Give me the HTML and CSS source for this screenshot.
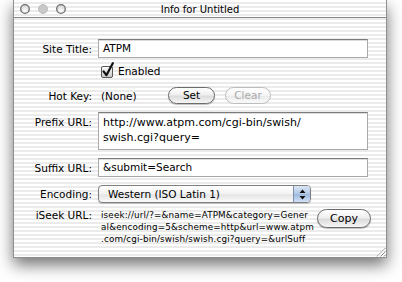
FILE: index.html
```html
<!DOCTYPE html>
<html lang="en">
<head>
    <meta charset="UTF-8">
    <title>Info for Untitled</title>
    <link rel="stylesheet" href="styles.css">
</head>
<body>
    <div class="window">
        <div class="titlebar">
            <div class="lights">
                <svg width="56" height="12" viewBox="0 0 56 12">
                    <defs>
                        <radialGradient id="lightFill" cx="50%" cy="70%" r="60%">
                            <stop offset="0" stop-color="#ffffff"/>
                            <stop offset="1" stop-color="#d6d6d6"/>
                        </radialGradient>
                    </defs>
                    <circle cx="11" cy="6" r="4.3" fill="url(#lightFill)" stroke="#6e6e6e" stroke-width="1.3"/>
                    <circle cx="29" cy="6" r="4.5" fill="#c9c9c9" stroke="#bdbdbd" stroke-width="1"/>
                    <circle cx="47" cy="6" r="4.3" fill="url(#lightFill)" stroke="#6e6e6e" stroke-width="1.3"/>
                </svg>
            </div>
            <div class="title">Info for Untitled</div>
            <div></div>
        </div>

        <div class="content">
            <div class="row row-title">
                <span class="lbl">Site Title:</span>
                <div class="field">ATPM</div>
            </div>

            <div class="row row-check">
                <span class="lbl"></span>
                <div class="check">
                    <svg width="15" height="16" viewBox="0 0 15 16">
                        <defs>
                            <linearGradient id="boxFill" x1="0" y1="0" x2="0" y2="1">
                                <stop offset="0" stop-color="#ffffff"/>
                                <stop offset="1" stop-color="#c4c4c4"/>
                            </linearGradient>
                        </defs>
                        <rect x="1.5" y="4.5" width="11" height="11" rx="1.5" fill="url(#boxFill)" stroke="#5a5a5a"/>
                        <path d="M3.6 9.4 L6.4 13.2 L12.8 1.2" fill="none" stroke="#111" stroke-width="2.2" stroke-linecap="round" stroke-linejoin="round"/>
                    </svg>
                    <span>Enabled</span>
                </div>
            </div>

            <div class="row row-hotkey">
                <span class="lbl">Hot Key:</span>
                <span class="hotkey">(None)</span>
                <button class="pill pill-set">Set</button>
                <button class="pill pill-clear" disabled>Clear</button>
            </div>

            <div class="row row-prefix">
                <span class="lbl">Prefix URL:</span>
                <div class="field area">http://www.atpm.com/cgi-bin/swish/<br>swish.cgi?query=</div>
            </div>

            <div class="row row-suffix">
                <span class="lbl">Suffix URL:</span>
                <div class="field">&amp;submit=Search</div>
            </div>

            <div class="row row-encoding">
                <span class="lbl">Encoding:</span>
                <div class="popup">
                    <span class="popup-text">Western (ISO Latin 1)</span>
                    <span class="popup-arrows">
                        <svg width="7" height="11" viewBox="0 0 7 11">
                            <path d="M3.5 0.5 L6.5 4 L0.5 4 Z" fill="#111"/>
                            <path d="M3.5 10.5 L6.5 7 L0.5 7 Z" fill="#111"/>
                        </svg>
                    </span>
                </div>
            </div>

            <div class="row row-iseek">
                <span class="lbl">iSeek URL:</span>
                <div class="iseek">iseek://url/?=&amp;name=ATPM&amp;category=Gener<br>al&amp;encoding=5&amp;scheme=http&amp;url=www.atpm<br>.com/cgi-bin/swish/swish.cgi?query=&amp;urlSuff</div>
                <button class="pill pill-copy">Copy</button>
            </div>
        </div>

        <svg class="grip" width="11" height="11" viewBox="0 0 11 11">
            <path d="M10.5 2 L2 10.5 M10.5 5.5 L5.5 10.5 M10.5 9 L9 10.5" stroke="#8c8c8c" stroke-width="1"/>
            <path d="M10.5 3 L3 10.5 M10.5 6.5 L6.5 10.5" stroke="#ffffff" stroke-width="1"/>
        </svg>
    </div>
</body>
</html>
```

FILE: styles.css
```css
* {
    margin: 0;
    padding: 0;
    box-sizing: border-box;
}

body {
    background: #fff;
    font-family: "DejaVu Sans", Verdana, sans-serif;
    font-size: 10.5px;
    color: #000;
    width: 402px;
    height: 282px;
    overflow: hidden;
}

.window {
    position: relative;
    margin-left: 13px;
    width: 374px;
    height: 258px;
    border: 1px solid #8f8f8f;
    border-top: none;
    background: repeating-linear-gradient(#ffffff 0 2px, #ebebeb 2px 4px);
    box-shadow: 0 7px 15px rgba(0,0,0,0.55);
}

.titlebar {
    display: grid;
    grid-template-columns: 1fr auto 1fr;
    align-items: center;
    height: 18px;
    border-bottom: 1px solid #8a8a8a;
}

.lights {
    display: flex;
    align-items: center;
    height: 17px;
    padding-top: 1px;
}

.title {
    font-size: 10px;
    padding-top: 1px;
}

.content {
    padding-top: 21px;
}

.row {
    display: flex;
    align-items: center;
}

.lbl {
    width: 78px;
    flex: none;
    text-align: right;
    margin-right: 6px;
}

.field {
    width: 270px;
    height: 19px;
    background: #fff;
    border: 1px solid #a9a9a9;
    border-top-color: #7c7c7c;
    box-shadow: inset 0 1px 0 #dcdcdc;
    padding: 0 4px;
    line-height: 17px;
    white-space: nowrap;
}

.row-check {
    margin-top: 4px;
    height: 16px;
}

.check {
    display: flex;
    align-items: flex-end;
    margin-left: 2px;
    height: 16px;
}

.check svg {
    display: block;
}

.check span {
    margin-left: 3px;
    line-height: 14px;
}

.row-hotkey {
    margin-top: 9px;
    height: 17px;
}

.hotkey {
    margin-left: 3px;
    width: 67px;
}

.pill {
    font-family: inherit;
    font-size: 10.5px;
    color: #000;
    height: 17px;
    border: 1px solid #6b6b6b;
    border-radius: 9px;
    background: linear-gradient(#ffffff 0%, #efefef 45%, #dcdcdc 55%, #f6f6f6 100%);
    box-shadow: 0 1px 1px rgba(0,0,0,0.25);
    line-height: 15px;
}

.pill-set {
    width: 47px;
}

.pill-clear {
    width: 46px;
    margin-left: 10px;
    color: #a9a9a9;
    border-color: #bcbcbc;
    box-shadow: none;
    background: linear-gradient(#ffffff 0%, #f4f4f4 50%, #eaeaea 55%, #fafafa 100%);
}

.row-prefix {
    margin-top: 8px;
    align-items: flex-start;
}

.row-prefix .lbl {
    padding-top: 3px;
    line-height: 15px;
}

.field.area {
    height: 38px;
    font-size: 11px;
    line-height: 15px;
    padding-top: 2px;
}

.row-suffix {
    margin-top: 8px;
}

.row-encoding {
    margin-top: 8px;
}

.popup {
    display: flex;
    width: 213px;
    height: 18px;
    border: 1px solid #808080;
    border-radius: 4px;
    background: linear-gradient(#ffffff 0%, #f2f2f2 50%, #e4e4e4 55%, #fbfbfb 100%);
    box-shadow: 0 1px 1px rgba(0,0,0,0.2);
    overflow: hidden;
}

.popup-text {
    flex: 1;
    padding-left: 9px;
    line-height: 16px;
}

.popup-arrows {
    display: flex;
    align-items: center;
    justify-content: center;
    width: 17px;
    border-left: 1px solid #7d8ea8;
    background: linear-gradient(#dbe6f5 0%, #b3c8e6 48%, #9db8de 52%, #d2e2f6 100%);
}

.row-iseek {
    margin-top: 6px;
    align-items: flex-start;
}

.row-iseek .lbl {
    line-height: 12px;
}

.iseek {
    width: 216px;
    margin-left: 3px;
    font-size: 8.8px;
    letter-spacing: 0.15px;
    line-height: 12px;
    white-space: nowrap;
}

.pill-copy {
    width: 54px;
    height: 19px;
    line-height: 17px;
    border-radius: 10px;
    font-size: 11px;
}

.grip {
    position: absolute;
    right: 0;
    bottom: 0;
}
```
